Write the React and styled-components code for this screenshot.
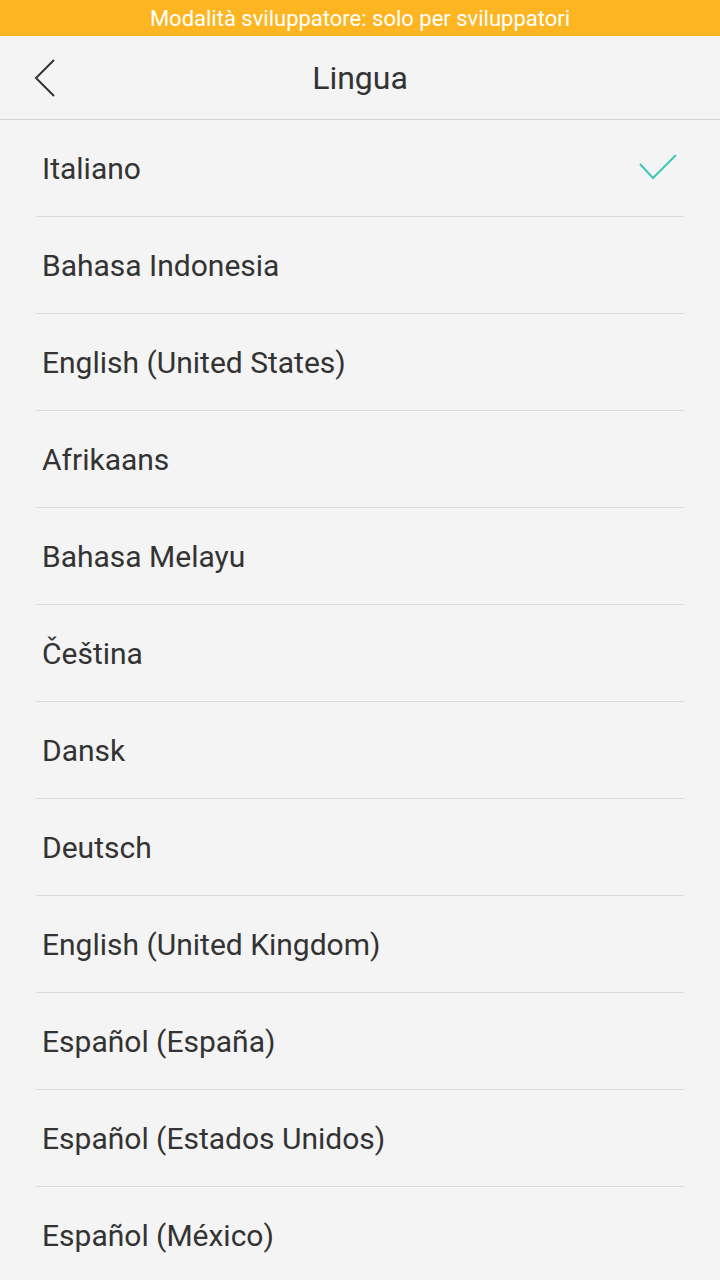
import styled, {createGlobalStyle} from 'styled-components'

const languages = [
  'Italiano',
  'Bahasa Indonesia',
  'English (United States)',
  'Afrikaans',
  'Bahasa Melayu',
  'Čeština',
  'Dansk',
  'Deutsch',
  'English (United Kingdom)',
  'Español (España)',
  'Español (Estados Unidos)',
  'Español (México)',
]

const selected = 'Italiano'

export default function App() {
  return (
    <>
      <GlobalStyle />
      <Page>
        <DevBar>Modalità sviluppatore: solo per sviluppatori</DevBar>
        <Header>
          <BackButton aria-label="Indietro">
            <svg width="24" height="38" viewBox="0 0 24 38">
              <polyline
                points="21,1 3,19 21,37"
                fill="none"
                stroke="#333"
                strokeWidth="2"
              />
            </svg>
          </BackButton>
          <Title>Lingua</Title>
        </Header>
        <List>
          {languages.map(lang => (
            <Row key={lang}>
              <Label>{lang}</Label>
              {lang === selected && (
                <svg width="40" height="28" viewBox="0 0 40 28">
                  <polyline
                    points="2,10 15,24 38,1"
                    fill="none"
                    stroke="#3cc8b4"
                    strokeWidth="2"
                  />
                </svg>
              )}
            </Row>
          ))}
        </List>
      </Page>
    </>
  )
}

const GlobalStyle = createGlobalStyle`
  body {
    margin: 0;
    background: #f4f4f4;
    font-family: Roboto, 'Noto Sans', sans-serif;
  }
`

const Page = styled.div`
  width: 720px;
  height: 1280px;
  overflow: hidden;
  background: #f4f4f4;
`

const DevBar = styled.div`
  height: 36px;
  background: #fdb621;
  color: #fff;
  font-size: 22px;
  display: flex;
  align-items: center;
  justify-content: center;
`

const Header = styled.div`
  height: 83px;
  border-bottom: 1px solid #d2d2d2;
  display: flex;
  align-items: center;
  justify-content: center;
  position: relative;
`

const BackButton = styled.button`
  position: absolute;
  left: 33px;
  top: 23px;
  border: none;
  background: none;
  padding: 0;
  display: flex;
`

const Title = styled.h1`
  margin: 0;
  font-size: 32px;
  font-weight: 400;
  color: #333;
`

const List = styled.div`
  padding: 0 36px;
`

const Row = styled.div`
  height: 96px;
  border-bottom: 1px solid #dcdcdc;
  display: flex;
  align-items: center;
  justify-content: space-between;
  padding: 0 6px 0 6px;
  svg {
    margin-top: 0;
  }
`

const Label = styled.span`
  font-size: 30px;
  color: #333;
`
